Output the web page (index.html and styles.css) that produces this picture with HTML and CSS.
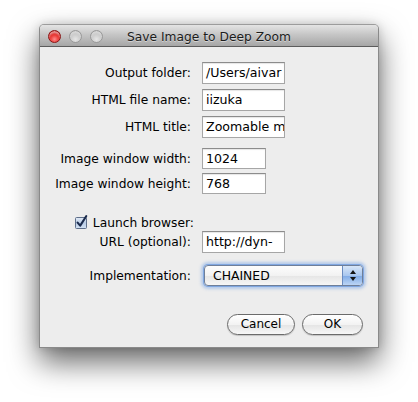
FILE: index.html
```html
<!DOCTYPE html>
<html>
<head>
<meta charset="utf-8">
<title>Save Image to Deep Zoom</title>
<link rel="stylesheet" href="styles.css">
</head>
<body>
<div class="stage">
  <div class="window">
    <div class="titlebar">
      <div class="lights">
        <span class="light close"></span>
        <span class="light off"></span>
        <span class="light off"></span>
      </div>
      <div class="title">Save Image to Deep Zoom</div>
      <div></div>
    </div>
    <div class="content">
      <div class="row">
        <div class="label">Output folder:</div>
        <div class="field">/Users/aivar</div>
      </div>
      <div class="row r-tight">
        <div class="label">HTML file name:</div>
        <div class="field">iizuka</div>
      </div>
      <div class="row r-tight">
        <div class="label">HTML title:</div>
        <div class="field">Zoomable m</div>
      </div>
      <div class="row r-group">
        <div class="label">Image window width:</div>
        <div class="field num">1024</div>
      </div>
      <div class="row r-num">
        <div class="label">Image window height:</div>
        <div class="field num">768</div>
      </div>
      <div class="row r-check">
        <div class="check-label">
          <svg class="checkbox" width="13" height="14" viewBox="0 0 13 14">
            <defs>
              <linearGradient id="cb" x1="0" y1="0" x2="0" y2="1">
                <stop offset="0" stop-color="#e4ecf7"/>
                <stop offset="0.5" stop-color="#b9cce6"/>
                <stop offset="1" stop-color="#d3e2f4"/>
              </linearGradient>
            </defs>
            <rect x="0.5" y="2.5" width="11" height="11" rx="1" fill="url(#cb)" stroke="#5f6f8a"/>
            <path d="M2.6 7.6 L5.2 10.6 L11.2 1.2" fill="none" stroke="#1b2b4d" stroke-width="2.1" stroke-linecap="round" stroke-linejoin="round"/>
          </svg>
          <span>Launch browser:</span>
        </div>
      </div>
      <div class="row r-url">
        <div class="label">URL (optional):</div>
        <div class="field">http://dyn-</div>
      </div>
      <div class="row r-popup">
        <div class="label">Implementation:</div>
        <div class="popup">
          <span class="popup-text">CHAINED</span>
          <span class="popup-arrows"><span class="up"></span><span class="down"></span></span>
        </div>
      </div>
      <div class="buttons">
        <button class="btn cancel">Cancel</button>
        <button class="btn ok">OK</button>
      </div>
    </div>
  </div>
</div>
</body>
</html>
```
FILE: styles.css
```css
* { box-sizing: border-box; }
html, body { margin: 0; background: #fff; }
body {
  font-family: "DejaVu Sans", "Lucida Grande", sans-serif;
  font-size: 12.25px;
  color: #000;
}
.stage { padding: 24px 0 0 39px; min-height: 402px; }
.window {
  width: 340px;
  background: #ededed;
  border: 1px solid #8a8a8a;
  border-top-color: #9c9c9c;
  border-radius: 5px 5px 0 0;
  box-shadow: 0 14px 30px rgba(0,0,0,0.6), 0 0 10px rgba(0,0,0,0.15);
}
.titlebar {
  height: 22px;
  border-bottom: 1px solid #5c5c5c;
  border-radius: 4px 4px 0 0;
  background: linear-gradient(#e4e4e4, #c6c6c6 45%, #a6a6a6);
  display: grid;
  grid-template-columns: 1fr auto 1fr;
  align-items: center;
}
.lights { display: flex; gap: 8px; padding-left: 8px; padding-top: 1px; }
.light { width: 13px; height: 13px; border-radius: 50%; display: block; }
.light.close {
  background: radial-gradient(circle at 50% 75%, #ff8a8a 0, #e8332f 45%, #b31010 100%);
  border: 1px solid #8a1414;
  box-shadow: inset 0 2px 2px rgba(255,255,255,0.55);
}
.light.off {
  background: radial-gradient(circle at 50% 75%, #e6e6e6 0, #c8c8c8 55%, #b2b2b2 100%);
  border: 1px solid #999;
  box-shadow: inset 0 2px 2px rgba(255,255,255,0.4);
}
.title {
  color: #1c1c1c;
  text-shadow: 0 1px 0 rgba(255,255,255,0.45);
  padding-top: 2px;
  white-space: nowrap;
}
.content { padding: 15px 15px 12px 0; }
.row { display: flex; align-items: center; column-gap: 12px; }
.label { width: 151px; flex: none; text-align: right; white-space: nowrap; }
.field {
  width: 83px;
  height: 22px;
  line-height: 20px;
  padding-left: 3px;
  font-size: 12.6px;
  background: #fff;
  border: 1px solid #a6a6a6;
  border-top-color: #8c8c8c;
  box-shadow: inset 0 1px 1px rgba(0,0,0,0.1);
  white-space: nowrap;
  overflow: hidden;
}
.field.num { width: 64px; height: 21px; line-height: 19px; }
.r-tight { margin-top: 5px; }
.r-group { margin-top: 10px; }
.r-num { margin-top: 4px; }
.r-check { margin-top: 22px; height: 14px; }
.r-url { margin-top: 1px; }
.r-popup { margin-top: 12px; }
.row .field, .row .popup { margin-left: -1px; }
.check-label {
  width: 154px;
  display: flex;
  justify-content: flex-end;
  align-items: center;
  gap: 5px;
  white-space: nowrap;
}
.checkbox { display: block; margin-top: -3px; }
.row .popup {
  margin-left: 1px;
  width: 161px;
  height: 21px;
  display: flex;
  border: 1px solid #6f7f99;
  border-radius: 4px;
  background: linear-gradient(#fdfdfd, #f2f2f2 50%, #e5e5e5 51%, #f6f6f6);
  box-shadow: 0 0 0 1px rgba(110,155,222,0.75), 0 0 3px 3px rgba(110,160,230,0.45);
}
.popup-text { flex: 1; padding-left: 8px; line-height: 19px; font-size: 12.4px; }
.popup-arrows {
  width: 20px;
  border-left: 1px solid #6a8bbf;
  border-radius: 0 3px 3px 0;
  background: linear-gradient(#d7e6f8, #a9c7ef 50%, #7eaae6 51%, #bcd5f5);
  display: flex;
  flex-direction: column;
  align-items: center;
  justify-content: center;
  gap: 3px;
}
.up, .down { width: 0; height: 0; border-left: 3px solid transparent; border-right: 3px solid transparent; }
.up { border-bottom: 4px solid #141414; }
.down { border-top: 4px solid #141414; }
.buttons { display: flex; justify-content: flex-end; gap: 7px; margin-top: 28px; }
.btn {
  height: 21px;
  padding: 0;
  font: inherit;
  font-size: 12px;
  color: #000;
  line-height: 19px;
  text-align: center;
  border: 1px solid #6b6b6b;
  border-radius: 11px;
  background: linear-gradient(#ffffff, #f3f3f3 50%, #e4e4e4 51%, #f7f7f7);
  box-shadow: 0 1px 1px rgba(0,0,0,0.18);
}
.btn.cancel { width: 68px; }
.btn.ok { width: 61px; }
```
